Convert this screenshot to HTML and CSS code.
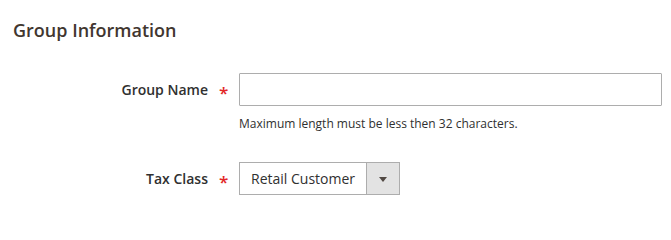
FILE: index.html
```html
<!DOCTYPE html>
<html lang="en">
<head>
<meta charset="utf-8">
<title>Group Information</title>
<link rel="stylesheet" href="styles.css">
</head>
<body>
<div class="page">
  <h2 class="title">Group Information</h2>
  <div class="field">
    <label class="label" for="gname">Group Name</label>
    <span class="req">*</span>
    <div class="control">
      <input class="input" id="gname" type="text">
      <div class="note">Maximum length must be less then 32 characters.</div>
    </div>
  </div>
  <div class="field field-tax">
    <label class="label" for="tax">Tax Class</label>
    <span class="req">*</span>
    <div class="control">
      <div class="select-wrap">
        <select class="select" id="tax">
          <option>Retail Customer</option>
        </select>
        <span class="select-btn"><span class="caret"></span></span>
      </div>
    </div>
  </div>
</div>
</body>
</html>
```

FILE: styles.css
```css
html, body {
  margin: 0;
  padding: 0;
  background: #ffffff;
}
body {
  font-family: "Open Sans", "Liberation Sans", sans-serif;
  color: #303030;
}
.page {
  padding: 19px 9px 0 0;
}
.title {
  margin: 0;
  padding-left: 13px;
  font-size: 18px;
  line-height: 22px;
  font-weight: 600;
  color: #41362f;
}
.field {
  display: grid;
  grid-template-columns: 208px 31px 1fr;
  align-items: start;
  margin-top: 32px;
}
.field-tax {
  margin-top: 29px;
}
.label {
  grid-column: 1;
  text-align: right;
  font-size: 14px;
  line-height: 19px;
  font-weight: 600;
  color: #303030;
  padding-top: 7px;
}
.req {
  grid-column: 2;
  padding-left: 11px;
  color: #e22626;
  font-size: 17px;
  font-weight: 600;
  line-height: 1;
  padding-top: 11px;
}
.control {
  grid-column: 3;
  display: flex;
  flex-direction: column;
  align-items: flex-start;
}
.input {
  box-sizing: border-box;
  width: 100%;
  height: 33px;
  margin: 0;
  border: 1px solid #adadad;
  border-radius: 1px;
  padding: 0 10px;
  font: 14px "Open Sans", sans-serif;
  color: #303030;
  background: #fff;
  outline: none;
}
.note {
  margin-top: 9px;
  font-size: 12px;
  line-height: 18px;
  color: #303030;
}
.select-wrap {
  box-sizing: border-box;
  display: flex;
  width: 161px;
  height: 33px;
  border: 1px solid #adadad;
  background: #fff;
}
.select {
  flex: 1;
  min-width: 0;
  border: 0;
  margin: 0;
  padding: 0 0 0 11px;
  -webkit-appearance: none;
  appearance: none;
  background: #fff;
  font: 14px "Open Sans", sans-serif;
  color: #303030;
  outline: none;
}
.select-btn {
  box-sizing: border-box;
  width: 33px;
  border-left: 1px solid #adadad;
  background: #e3e3e3;
  display: flex;
  align-items: center;
  justify-content: center;
}
.caret {
  width: 0;
  height: 0;
  border-style: solid;
  border-width: 5px 4px 0 4px;
  border-color: #514943 transparent transparent transparent;
  margin-top: 1px;
}
```
